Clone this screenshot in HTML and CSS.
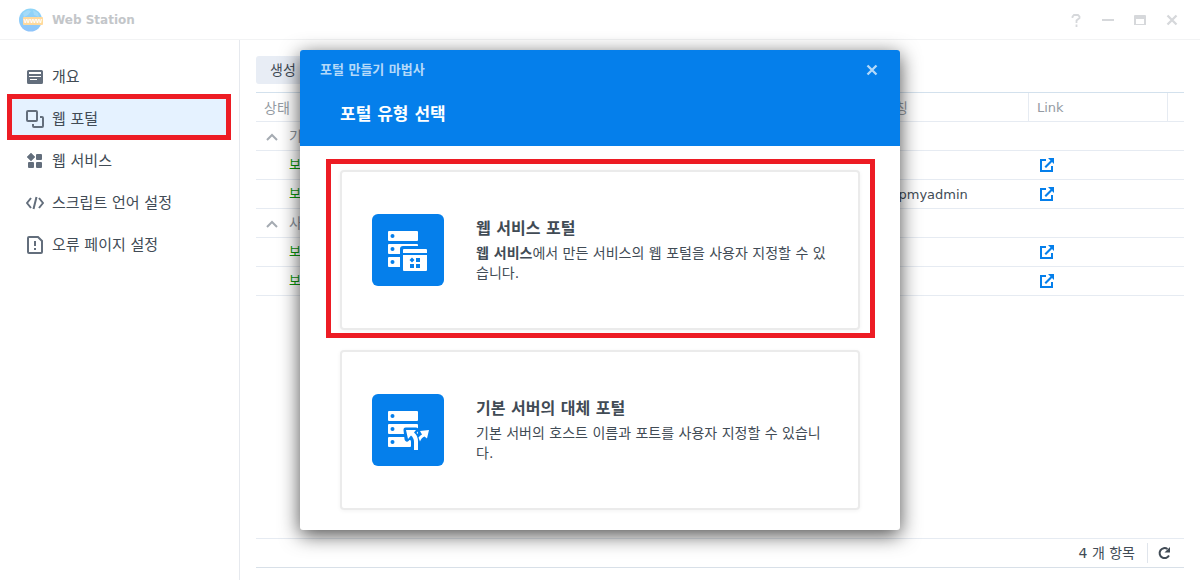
FILE: index.html
```html
<!DOCTYPE html>
<html lang="ko">
<head>
<meta charset="utf-8">
<title>Web Station</title>
<link rel="stylesheet" href="styles.css">
</head>
<body>
<svg class="defs" aria-hidden="true">
  <symbol id="open" viewBox="0 0 14 14"><path d="M6 2H1v11h11V8" fill="none" stroke="currentColor" stroke-width="2"/><path d="M8 0h6v6l-2-2-6 6-1.500-1.500 6-6z" fill="currentColor"/></symbol>
  <symbol id="chevron" viewBox="0 0 12 8"><path d="M1 7l5-5 5 5" fill="none" stroke="currentColor" stroke-width="2"/></symbol>
  <symbol id="cross" viewBox="0 0 12 12"><path d="M1.500 1.500l9 9m0-9l-9 9" fill="none" stroke="currentColor" stroke-width="2.300"/></symbol>
</svg>
<div class="window">
  <header class="titlebar">
    <svg class="logo" viewBox="0 0 24 24" aria-hidden="true">
      <defs><linearGradient id="globe" x1="0" y1="0" x2="0" y2="1"><stop offset="0" stop-color="#8fd6f8"/><stop offset="1" stop-color="#8fc4fa"/></linearGradient></defs>
      <circle cx="11.500" cy="12" r="11.500" fill="url(#globe)"/>
      <path d="M4 5l5-3 3 1-3 4-4 2zM14 2l5 3 1 4-5-2z" fill="#a4dbf9"/>
      <rect x="4" y="9" width="20" height="8" rx="1" fill="#ffd99c"/>
      <text x="14" y="15" text-anchor="middle" class="logo-text">www</text>
    </svg>
    <h1 class="app-name">Web Station</h1>
    <div class="controls">
      <button class="control" aria-label="도움말"><svg width="12" height="14" viewBox="0 0 12 14"><path d="M2.500 5V3.500L4 2h4l1.500 1.500V5L6.500 7.500V10M6.500 11.500V14" fill="none" stroke="currentColor" stroke-width="1.800"/></svg></button>
      <button class="control" aria-label="최소화"><svg width="12" height="12" viewBox="0 0 12 12"><path d="M0 5h12v2H0z" fill="currentColor"/></svg></button>
      <button class="control" aria-label="최대화"><svg width="12" height="12" viewBox="0 0 12 12"><path d="M1 1h10a1 1 0 0 1 1 1v9H0V2a1 1 0 0 1 1-1zM2 5v5h8V5z" fill="currentColor" fill-rule="evenodd"/></svg></button>
      <button class="control" aria-label="닫기"><svg width="12" height="12"><use href="#cross"/></svg></button>
    </div>
  </header>
  <div class="body">
    <nav class="sidebar">
      <a class="nav-item" href="#overview"><svg class="nav-icon" viewBox="0 0 18 18"><path d="M2.500 2h13A1.500 1.500 0 0 1 17 3.500v11a1.500 1.500 0 0 1-1.500 1.500h-13A1.500 1.500 0 0 1 1 14.500v-11A1.500 1.500 0 0 1 2.500 2zM3 4v2h12V4zM3 8v1h12V8zM4 11v1h7v-1z" fill="currentColor" fill-rule="evenodd"/></svg>개요</a>
      <a class="nav-item selected" href="#portal" aria-current="page"><svg class="nav-icon" viewBox="0 0 18 18"><g fill="none" stroke="currentColor" stroke-width="2"><rect x="1" y="1" width="10" height="10" rx="1"/><path d="M14 7h2a1 1 0 0 1 1 1v8a1 1 0 0 1-1 1H8a1 1 0 0 1-1-1v-2"/></g></svg>웹 포털<span class="marker marker-nav"></span></a>
      <a class="nav-item" href="#service"><svg class="nav-icon" viewBox="0 0 18 18"><g fill="currentColor"><path d="M5 1l4 4-4 4-4-4z" stroke="currentColor" stroke-width=".5" stroke-linejoin="round"/><rect x="10" y="2" width="6" height="6" rx="1"/><rect x="2" y="10" width="6" height="6" rx="1"/><rect x="10" y="10" width="6" height="6" rx="1"/></g></svg>웹 서비스</a>
      <a class="nav-item" href="#script"><svg class="nav-icon" viewBox="0 0 18 18"><path d="M5 4L1 9l4 5M13 4l4 5-4 5M10.500 3l-3 12" fill="none" stroke="currentColor" stroke-width="2"/></svg>스크립트 언어 설정</a>
      <a class="nav-item" href="#error"><svg class="nav-icon" viewBox="0 0 18 18"><path d="M3 1h9l4 4v11a1 1 0 0 1-1 1H3a1 1 0 0 1-1-1V2a1 1 0 0 1 1-1z" fill="none" stroke="currentColor" stroke-width="2"/><path d="M8 5h2v5H8zM8 12h2v2H8z" fill="currentColor"/></svg>오류 페이지 설정</a>
    </nav>
    <main class="main">
      <div class="toolbar"><button class="create">생성</button></div>
      <table class="portals">
        <colgroup><col><col class="col-alias"><col class="col-link"><col class="col-end"></colgroup>
        <thead><tr><th>상태</th><th>별칭</th><th>Link</th><th></th></tr></thead>
        <tbody>
          <tr class="group"><td colspan="4"><svg class="chevron"><use href="#chevron"/></svg>기본</td></tr>
          <tr><td class="status">보통</td><td></td><td class="link-cell"><a class="open" href="#open1" aria-label="열기"><svg width="14" height="14"><use href="#open"/></svg></a></td><td></td></tr>
          <tr><td class="status">보통</td><td>phpmyadmin</td><td class="link-cell"><a class="open" href="#open2" aria-label="열기"><svg width="14" height="14"><use href="#open"/></svg></a></td><td></td></tr>
          <tr class="group"><td colspan="4"><svg class="chevron"><use href="#chevron"/></svg>사용자</td></tr>
          <tr><td class="status">보통</td><td></td><td class="link-cell"><a class="open" href="#open3" aria-label="열기"><svg width="14" height="14"><use href="#open"/></svg></a></td><td></td></tr>
          <tr><td class="status">보통</td><td></td><td class="link-cell"><a class="open" href="#open4" aria-label="열기"><svg width="14" height="14"><use href="#open"/></svg></a></td><td></td></tr>
        </tbody>
      </table>
      <footer class="statusbar">
        <span class="count">4 개 항목</span>
        <button class="refresh" aria-label="새로 고침"><svg width="14" height="14" viewBox="0 0 14 14"><path d="M12 9.500A5 5 0 1 1 10.500 3" fill="none" stroke="currentColor" stroke-width="2"/><path d="M13 1v5.500H7.500z" fill="currentColor"/></svg></button>
      </footer>
    </main>
  </div>
  <section class="dialog" role="dialog" aria-labelledby="wizard-name">
    <header class="dialog-head">
      <div class="dialog-bar"><span id="wizard-name">포털 만들기 마법사</span><button class="dialog-close" aria-label="닫기"><svg width="12" height="12"><use href="#cross"/></svg></button></div>
      <h2 class="dialog-title">포털 유형 선택</h2>
    </header>
    <div class="options">
      <button class="option">
        <svg class="option-icon" viewBox="0 0 72 72">
          <g fill="#fff"><rect x="16" y="17" width="30" height="10" rx="1"/><rect x="16" y="30" width="30" height="10" rx="1"/><rect x="16" y="43" width="30" height="10" rx="1"/></g>
          <g fill="#057feb"><circle cx="20.500" cy="22" r="2"/><circle cx="20.500" cy="35" r="2"/><circle cx="20.500" cy="48" r="2"/><path d="M28 56V35q0-3 3-3h27v24z"/></g>
          <path d="M32 35h22a1 1 0 0 1 1 1v3H31v-3a1 1 0 0 1 1-1zM31 41h24v15a1 1 0 0 1-1 1H32a1 1 0 0 1-1-1z" fill="#fff"/>
          <path d="M40 43.500l2.500 2.500-2.500 2.500-2.500-2.500zM44 44h4v4h-4zM38 50h4v4h-4zM44 50h4v4h-4z" fill="#057feb"/>
        </svg>
        <span class="option-text"><span class="option-name">웹 서비스 포털</span><span class="option-desc"><b>웹 서비스</b>에서 만든 서비스의 웹 포털을 사용자 지정할 수 있습니다.</span></span>
        <span class="marker marker-option"></span>
      </button>
      <button class="option">
        <svg class="option-icon" viewBox="0 0 72 72">
          <g fill="#fff"><rect x="16" y="17" width="30" height="10" rx="1"/><rect x="16" y="30" width="30" height="10" rx="1"/><rect x="16" y="43" width="23" height="10" rx="1"/></g>
          <g fill="#057feb"><circle cx="20.500" cy="22" r="2"/><circle cx="20.500" cy="35" r="2"/><circle cx="20.500" cy="48" r="2"/></g>
          <path d="M34 36h10l-3 3q5 4 5 10v7h-4v-7q0-4-4-7l-3 3z" fill="#057feb" stroke="#057feb" stroke-width="5" stroke-linejoin="round"/>
          <path d="M34 36h10l-2 2.500q4 3 4 9V56h-4v-8q0-4-3-6.500L36 45zM57 36l-2 8.500-2.500-2q-3 1-4.500 5-1-2.500-1.500-4 1.500-2 3.500-3L48 37z" fill="#fff"/>
        </svg>
        <span class="option-text"><span class="option-name">기본 서버의 대체 포털</span><span class="option-desc">기본 서버의 호스트 이름과 포트를 사용자 지정할 수 있습니다.</span></span>
      </button>
    </div>
  </section>
</div>
</body>
</html>
```
FILE: styles.css
```css
* { box-sizing: border-box; }
body {
  margin: 0;
  font: 14px/20px "DejaVu Sans", "Noto Sans CJK KR", sans-serif;
  color: #414b55;
  background: #fff;
}
button { font: inherit; color: inherit; border: 0; padding: 0; background: none; cursor: pointer; }
svg { display: block; flex: none; }
.defs { position: absolute; width: 0; height: 0; }

.window { position: relative; display: flex; flex-direction: column; min-height: 100vh; }
.titlebar { display: flex; align-items: center; height: 40px; padding: 0 20px 0 19px; border-bottom: 1px solid #f2f3f4; }
.logo { width: 24px; height: 24px; }
.logo-text { font: bold 8px "Liberation Sans", sans-serif; fill: #fff; }
.app-name { flex: 1; margin: 0 0 0 9px; font-size: 12px; line-height: 20px; color: #c3c6c9; }
.controls { display: flex; gap: 16px; color: #d6d8db; }
.control { display: flex; align-items: center; justify-content: center; width: 16px; height: 16px; }

.body { flex: 1; display: flex; }
.sidebar { width: 240px; padding: 15px 9px 0 8px; border-right: 1px solid #e6e9ee; }
.nav-item { position: relative; display: flex; align-items: center; gap: 8px; height: 42px; padding: 2px 0 0 18px; font-size: 15px; color: #414b55; text-decoration: none; }
.nav-item.selected { background: #e5f2ff; }
.nav-icon { width: 18px; height: 18px; color: #636e7c; }

.marker { position: absolute; border: 5px solid #ed1c24; pointer-events: none; }
.marker-nav { inset: -3px -1px -1px -1px; }
.marker-option { inset: -13px -17px -10px -16px; }

.main { flex: 1; display: flex; flex-direction: column; padding: 16px 16px 12px; }
.toolbar { display: flex; margin-bottom: 8px; }
.create { height: 28px; padding: 0 14px; border-radius: 3px; background: #e8edf5; }
.portals { width: 100%; table-layout: fixed; border-collapse: separate; border-spacing: 0; border-top: 1px solid #d3e1ed; }
.col-alias { width: 155px; }
.col-link { width: 139px; }
.col-end { width: 16px; }
.portals th, .portals td { height: 29px; padding: 1px 8px 0; border-bottom: 1px solid #e6ebf2; text-align: left; line-height: 20px; }
.portals th { font-weight: normal; color: #949ba3; }
.portals th:nth-child(2), .portals th:nth-child(3) { border-right: 1px solid #e6ebf2; }
.portals th:nth-child(3), .portals td { font-size: 13px; }
.portals .group td { padding: 0 10px; color: #8b929a; font-size: 14px; }
.chevron { display: inline-block; width: 12px; height: 8px; margin-right: 11px; color: #a5abb2; }
.portals .status { padding: 0 0 0 33px; color: #0a970a; }
.portals .link-cell { padding: 0 11px; }
.open { display: block; width: 14px; color: #057feb; }

.statusbar { display: flex; align-items: center; justify-content: flex-end; height: 30px; margin-top: auto; border-top: 1px solid #e6ebf2; border-bottom: 1px solid #d8e0e8; }
.count { padding-right: 12px; }
.refresh { display: flex; align-items: center; justify-content: flex-end; width: 37px; height: 20px; padding-right: 13px; border-left: 1px solid #e0e5ec; }

.dialog { position: absolute; top: 50px; left: 50%; width: 600px; max-width: 100%; transform: translateX(-50%); border-radius: 3px; background: #fff; box-shadow: 0 5px 20px rgba(0, 0, 0, .7); }
.dialog-head { border-radius: 3px 3px 0 0; background: #057feb; color: #fff; }
.dialog-bar { display: flex; align-items: center; justify-content: space-between; height: 40px; padding: 0 20px; font-size: 13px; font-weight: bold; color: #b4d9f9; }
.dialog-close { display: flex; align-items: center; justify-content: center; width: 16px; height: 16px; }
.dialog-title { margin: 0; padding: 12px 40px 20px; font-size: 17px; line-height: 24px; }
.options { display: flex; flex-direction: column; gap: 20px; padding: 24px 40px 20px; }
.option { position: relative; display: flex; align-items: center; gap: 32px; min-height: 160px; padding: 0 20px 0 30px; border: 2px solid #ebebeb; border-radius: 4px; background: #fff; text-align: left; box-shadow: 0 1px 4px rgba(0, 0, 0, .05); }
.option-icon { width: 72px; height: 72px; border-radius: 6px; background: #057feb; }
.option-text { display: flex; flex-direction: column; gap: 2px; }
.option-name { font-size: 16px; font-weight: bold; line-height: 24px; }
```
